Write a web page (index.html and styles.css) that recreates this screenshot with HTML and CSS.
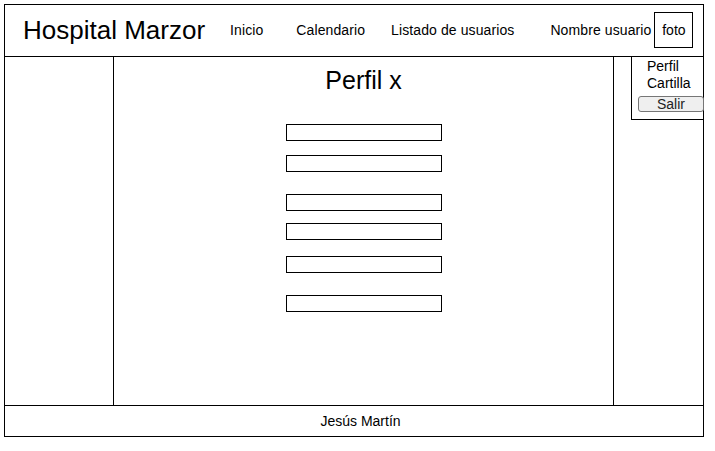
FILE: index.html
```html
<!DOCTYPE html>
<html lang="es">
<head>
<meta charset="utf-8">
<title>Hospital Marzor</title>
<link rel="stylesheet" href="styles.css">
</head>
<body>
<div class="frame">
  <header class="header">
    <div class="brand">Hospital Marzor</div>
    <nav class="nav">
      <a class="nav-link nav-inicio" href="#">Inicio</a>
      <a class="nav-link nav-cal" href="#">Calendario</a>
      <a class="nav-link nav-list" href="#">Listado de usuarios</a>
    </nav>
    <div class="user">
      <span class="user-name">Nombre usuario</span>
      <span class="photo">foto</span>
    </div>
  </header>
  <main class="main">
    <aside class="col-left"></aside>
    <section class="col-center">
      <h1 class="title">Perfil x</h1>
      <form class="form">
        <input class="field" type="text">
        <input class="field gap-14" type="text">
        <input class="field gap-22" type="text">
        <input class="field gap-12" type="text">
        <input class="field gap-16" type="text">
        <input class="field gap-22" type="text">
      </form>
    </section>
    <aside class="col-right">
      <div class="menu">
        <div class="menu-item">Perfil</div>
        <div class="menu-item">Cartilla</div>
        <button class="menu-btn" type="button">Salir</button>
      </div>
    </aside>
  </main>
  <footer class="footer">Jesús Martín</footer>
</div>
</body>
</html>
```

FILE: styles.css
```css
* { box-sizing: border-box; }

html, body {
  margin: 0;
  padding: 0;
  background: #fff;
}

body {
  font-family: "Liberation Sans", Arial, sans-serif;
  color: #000;
}

.frame {
  margin: 4px 0 0 4px;
  width: 700px;
  border: 1px solid #000;
}

.header {
  height: 52px;
  border-bottom: 1px solid #000;
  display: flex;
  align-items: center;
  padding-left: 18px;
  padding-bottom: 1px;
}

.brand {
  font-size: 26px;
  line-height: 30px;
}

.nav {
  display: flex;
  align-items: center;
}

.nav-link {
  font-size: 14px;
  color: #000;
  text-decoration: none;
  letter-spacing: 0.1px;
}

.nav-inicio { margin-left: 25px; }
.nav-cal { margin-left: 33px; }
.nav-list { margin-left: 26px; }

.user {
  display: flex;
  align-items: center;
  margin-left: 36px;
}

.user-name {
  font-size: 14px;
  letter-spacing: 0.1px;
}

.photo {
  margin-left: 3px;
  width: 39px;
  height: 36px;
  border: 1px solid #000;
  font-size: 14px;
  display: flex;
  align-items: center;
  justify-content: center;
}

.main {
  display: flex;
  height: 348px;
}

.col-left {
  width: 109px;
  border-right: 1px solid #000;
}

.col-center {
  flex: 1;
  border-right: 1px solid #000;
  display: flex;
  flex-direction: column;
  align-items: center;
  padding-top: 9px;
}

.col-right {
  width: 89px;
  position: relative;
}

.title {
  margin: 0;
  font-size: 25px;
  font-weight: normal;
  line-height: 29px;
}

.form {
  display: flex;
  flex-direction: column;
  margin-top: 29px;
}

.field {
  display: block;
  width: 156px;
  height: 17px;
  margin: 0;
  padding: 0;
  border: 1px solid #000;
  border-radius: 0;
  background: #fff;
}

.gap-12 { margin-top: 12px; }
.gap-14 { margin-top: 14px; }
.gap-16 { margin-top: 16px; }
.gap-22 { margin-top: 22px; }

.menu {
  position: absolute;
  top: -1px;
  left: 17px;
  right: -1px;
  height: 64px;
  border: 1px solid #000;
  background: #fff;
  padding: 1px 0 0 0;
  display: flex;
  flex-direction: column;
}

.menu-item {
  font-size: 14px;
  line-height: 17px;
  padding-left: 15px;
}

.menu-btn {
  margin: 4px 0 0 6px;
  width: 66px;
  height: 16px;
  padding: 0;
  font-family: "Liberation Sans", Arial, sans-serif;
  font-size: 14px;
  line-height: 14px;
  color: #222;
  background: #efefef;
  border: 1px solid #767676;
  border-radius: 3px;
}

.footer {
  border-top: 1px solid #000;
  height: 31px;
  font-size: 14px;
  display: flex;
  align-items: center;
  justify-content: center;
  padding-left: 13px;
}
```
